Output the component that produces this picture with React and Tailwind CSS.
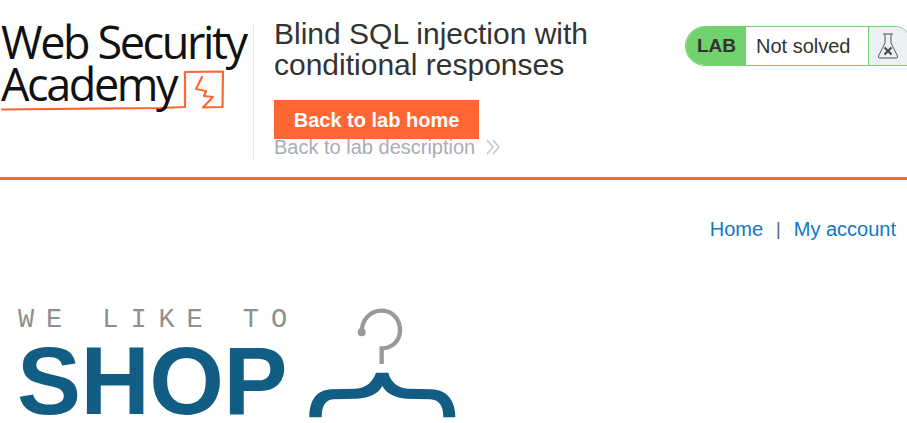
import React from "react";

const sans = "font-['Liberation_Sans',Arial,sans-serif]";

function Logo() {
  return (
    <div className="relative w-[250px] h-[110px] shrink-0 mt-[14px]">
      <svg className="absolute left-0 top-[56px]" width="230" height="44" viewBox="0 0 230 44" fill="none">
        <path d="M2 39.5 C50 39 110 38.5 160 38 L185 37 V2 L223 1.5 L222.5 37 L203 37.5 L213 27 L204 26 L206 21 L196 19 L202 7" stroke="#ff6633" strokeWidth="2.2" strokeLinejoin="round" strokeLinecap="round" />
      </svg>
      <div className="absolute left-[1px] top-[7px] flex flex-col font-['Open_Sans',sans-serif] font-medium text-[45px] leading-[42px] tracking-[-2.4px] text-[#111111] whitespace-nowrap">
        <span>Web Security</span>
        <span>Academy</span>
      </div>
    </div>
  );
}

function Flask() {
  return (
    <svg width="22" height="26" viewBox="0 0 22 26" fill="none" stroke="#555555" strokeWidth="1">
      <path d="M6 1 H16 M8 1 V10 L1.5 23 Q1 25 3 25 H19 Q21 25 20.5 23 L14 10 V1" />
      <path d="M7.5 14.5 L14.5 21.5 M14.5 14.5 L7.5 21.5" strokeWidth="2" stroke="#444444" />
    </svg>
  );
}

function LabStatus() {
  return (
    <div className="flex w-[225px] h-[40px] rounded-l-[20px] rounded-tr-[14px] overflow-hidden border border-[#70d16d] mt-[26px] ml-auto mr-[-3px] shrink-0 text-[#333332]">
      <div className="w-[60px] bg-[#70d16d] flex items-center justify-center font-bold text-[19px] pl-[1px]">LAB</div>
      <div className="w-[123px] bg-white flex items-center pl-[10px] text-[20px] border-r border-[#70d16d]">Not solved</div>
      <div className="flex-1 bg-[#ebf0f2] flex items-center pl-[8px]">
        <Flask />
      </div>
    </div>
  );
}

function Hanger() {
  return (
    <svg className="ml-[6px] shrink-0" width="170" height="123" viewBox="0 0 510 369" fill="none">
      <path d="M185 97 C185 60 210 32 245 32 C280 32 300 60 300 90 C300 125 275 145 245 145 V192" stroke="#999999" strokeWidth="13" />
      <circle cx="185" cy="97" r="12" fill="#999999" />
      <path
        d="M28 352 C28 300 50 270 95 268 L165 266 C200 264 218 245 228 218 L265 218 C272 245 292 264 325 266 L395 268 C440 270 466 300 466 352 L430 352 C430 320 420 300 390 298 L320 296 C285 294 258 280 247 258 C236 280 210 294 170 296 L100 298 C75 300 65 320 65 352 Z"
        fill="#125d83"
      />
    </svg>
  );
}

export default function App() {
  return (
    <div className={`${sans} w-[907px] h-[423px] overflow-hidden bg-white`}>
      <header className="flex h-[180px] border-b-[3px] border-[#ff6633]">
        <Logo />
        <div className="w-px h-[136px] bg-[#e6e6e6] mt-[25px] ml-[3px] shrink-0" />
        <div className="ml-[20px] pt-[18px] w-[360px] shrink-0">
          <h2 className="text-[30px] leading-[31px] text-[#333332] whitespace-nowrap">
            Blind SQL injection with
            <br />
            conditional responses
          </h2>
          <a className="flex items-center justify-center w-[205px] h-[39px] mt-[20px] bg-[#ff6633] text-white font-bold text-[20px]">
            Back to lab home
          </a>
          <a className="flex items-center gap-[10px] h-[18px] text-[20px] text-[#a8adb3] mt-[-1px] whitespace-nowrap">
            Back to lab description
            <svg width="16" height="16" viewBox="0 0 16 16" fill="none" stroke="#c2c2c2" strokeWidth="1.3">
              <path d="M2 1 L8 8 L2 15 M8 1 L14 8 L8 15" />
            </svg>
          </a>
        </div>
        <LabStatus />
      </header>
      <nav className="flex justify-end items-center gap-[13px] h-[30px] mt-[34px] pr-[11px] text-[20px] text-[#1078c4]">
        <a>Home</a>
        <span className="text-[#556070] text-[18px]">|</span>
        <a>My account</a>
      </nav>
      <div className="flex mt-[56px] ml-[17px]">
        <div className="flex flex-col w-[277px] shrink-0">
          <span className="font-['Liberation_Mono',monospace] text-[27px] leading-[26px] tracking-[11.9px] text-[#8f8f8f] mt-[7px] ml-[1px] whitespace-nowrap">
            WE LIKE TO
          </span>
          <span className="font-bold text-[96px] leading-[80px] text-[#125d83] mt-[8px] tracking-[-0.5px]">SHOP</span>
        </div>
        <Hanger />
      </div>
    </div>
  );
}
